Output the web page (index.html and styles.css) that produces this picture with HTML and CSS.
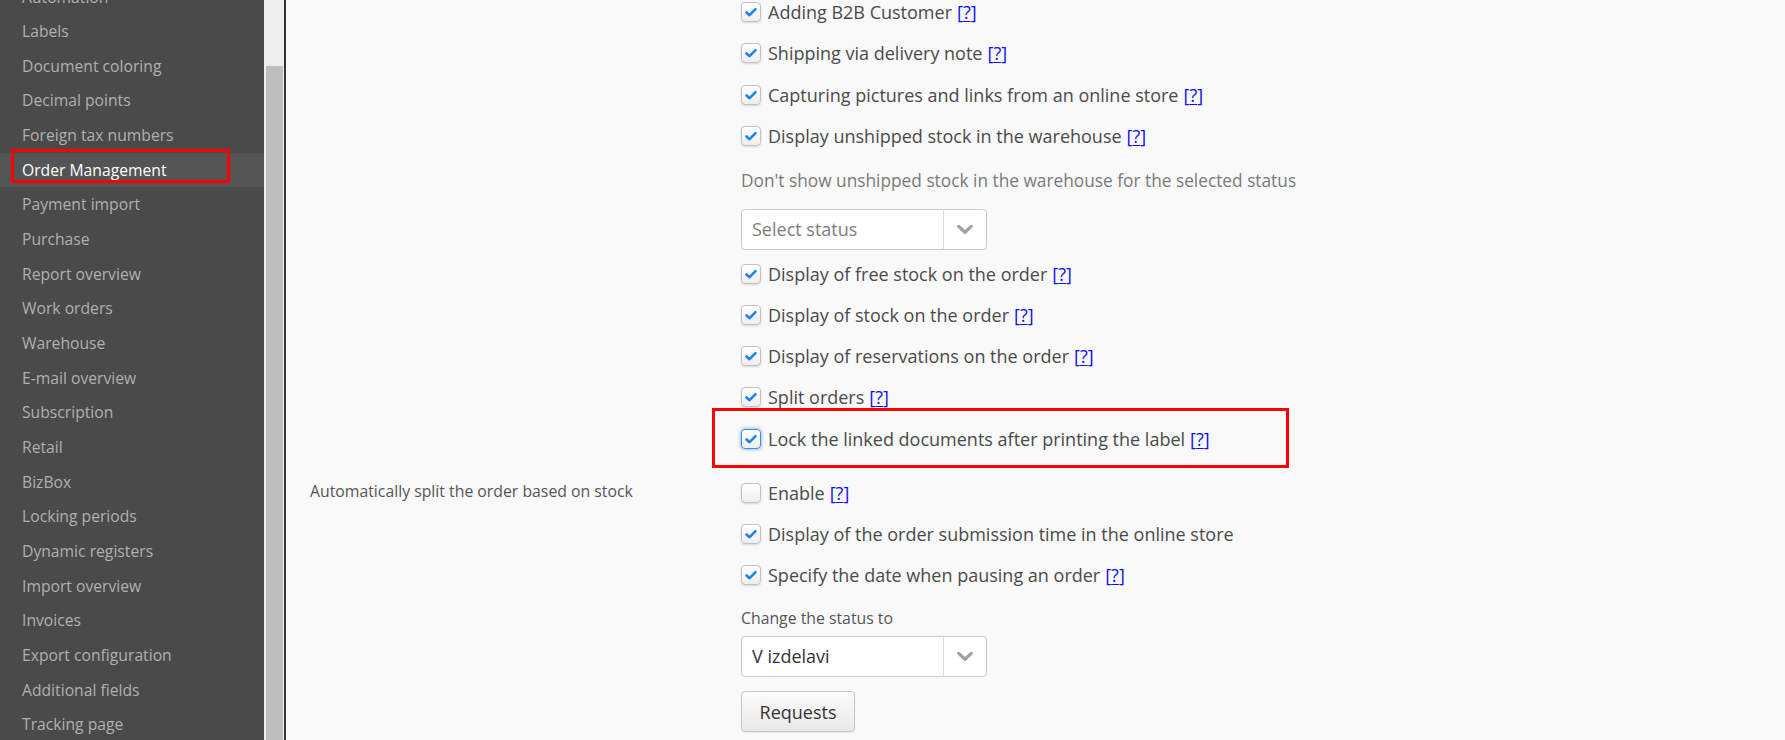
FILE: index.html
```html
<!DOCTYPE html>
<html>
<head>
<meta charset="utf-8">
<link rel="stylesheet" href="styles.css">
</head>
<body>
<div class="app">
  <nav class="sidebar">
    <ul class="menu">
      <li class="menu-item">Automation</li>
      <li class="menu-item">Labels</li>
      <li class="menu-item">Document coloring</li>
      <li class="menu-item">Decimal points</li>
      <li class="menu-item">Foreign tax numbers</li>
      <li class="menu-item active">Order Management<span class="mark mark-side"></span></li>
      <li class="menu-item">Payment import</li>
      <li class="menu-item">Purchase</li>
      <li class="menu-item">Report overview</li>
      <li class="menu-item">Work orders</li>
      <li class="menu-item">Warehouse</li>
      <li class="menu-item">E-mail overview</li>
      <li class="menu-item">Subscription</li>
      <li class="menu-item">Retail</li>
      <li class="menu-item">BizBox</li>
      <li class="menu-item">Locking periods</li>
      <li class="menu-item">Dynamic registers</li>
      <li class="menu-item">Import overview</li>
      <li class="menu-item">Invoices</li>
      <li class="menu-item">Export configuration</li>
      <li class="menu-item">Additional fields</li>
      <li class="menu-item">Tracking page</li>
    </ul>
  </nav>
  <div class="scrollbar"><div class="thumb"></div></div>
  <div class="divider"></div>
  <main class="content">
    <section class="group first">
      <div class="group-label"></div>
      <div class="group-body">
        <label class="check"><span class="box on"><svg viewBox="0 0 20 20"><path d="M5 10.5 L8.4 13.6 L15 6.8"/></svg></span>Adding B2B Customer <a class="help">[<u>?</u>]</a></label>
        <label class="check"><span class="box on"><svg viewBox="0 0 20 20"><path d="M5 10.5 L8.4 13.6 L15 6.8"/></svg></span>Shipping via delivery note <a class="help">[<u>?</u>]</a></label>
        <label class="check"><span class="box on"><svg viewBox="0 0 20 20"><path d="M5 10.5 L8.4 13.6 L15 6.8"/></svg></span>Capturing pictures and links from an online store <a class="help">[<u>?</u>]</a></label>
        <label class="check"><span class="box on"><svg viewBox="0 0 20 20"><path d="M5 10.5 L8.4 13.6 L15 6.8"/></svg></span>Display unshipped stock in the warehouse <a class="help">[<u>?</u>]</a></label>
        <p class="hint">Don't show unshipped stock in the warehouse for the selected status</p>
        <div class="select"><span class="select-value placeholder">Select status</span><span class="select-arrow"><svg viewBox="0 0 20 12"><path d="M3 2.5 L10 9 L17 2.5"/></svg></span></div>
        <label class="check"><span class="box on"><svg viewBox="0 0 20 20"><path d="M5 10.5 L8.4 13.6 L15 6.8"/></svg></span>Display of free stock on the order <a class="help">[<u>?</u>]</a></label>
        <label class="check"><span class="box on"><svg viewBox="0 0 20 20"><path d="M5 10.5 L8.4 13.6 L15 6.8"/></svg></span>Display of stock on the order <a class="help">[<u>?</u>]</a></label>
        <label class="check"><span class="box on"><svg viewBox="0 0 20 20"><path d="M5 10.5 L8.4 13.6 L15 6.8"/></svg></span>Display of reservations on the order <a class="help">[<u>?</u>]</a></label>
        <label class="check"><span class="box on"><svg viewBox="0 0 20 20"><path d="M5 10.5 L8.4 13.6 L15 6.8"/></svg></span>Split orders <a class="help">[<u>?</u>]</a></label>
        <label class="check highlighted"><span class="box on focus"><svg viewBox="0 0 20 20"><path d="M5 10.5 L8.4 13.6 L15 6.8"/></svg></span>Lock the linked documents after printing the label <a class="help">[<u>?</u>]</a><span class="mark mark-main"></span></label>
      </div>
    </section>
    <section class="group">
      <div class="group-label">Automatically split the order based on stock</div>
      <div class="group-body">
        <label class="check"><span class="box"></span>Enable <a class="help">[<u>?</u>]</a></label>
        <label class="check"><span class="box on"><svg viewBox="0 0 20 20"><path d="M5 10.5 L8.4 13.6 L15 6.8"/></svg></span>Display of the order submission time in the online store</label>
        <label class="check"><span class="box on"><svg viewBox="0 0 20 20"><path d="M5 10.5 L8.4 13.6 L15 6.8"/></svg></span>Specify the date when pausing an order <a class="help">[<u>?</u>]</a></label>
        <p class="field-label">Change the status to</p>
        <div class="select"><span class="select-value">V izdelavi</span><span class="select-arrow"><svg viewBox="0 0 20 12"><path d="M3 2.5 L10 9 L17 2.5"/></svg></span></div>
        <button class="btn">Requests</button>
      </div>
    </section>
  </main>
</div>
</body>
</html>
```

FILE: styles.css
```css
* { box-sizing: border-box; }
html, body { margin: 0; padding: 0; height: 100%; overflow: hidden; }
body { font-family: "Open Sans", "Liberation Sans", sans-serif; background: #f9f9f9; }

.app { display: flex; height: 740px; }

.sidebar { width: 264px; flex: none; background: #4a4a4a; overflow: hidden; }
.menu { list-style: none; margin: -20.5px 0 0 0; padding: 0; }
.menu-item {
  position: relative;
  height: 34.67px; line-height: 34.67px;
  padding-left: 22px;
  font-size: 15.7px; color: #b0b0b0;
  white-space: nowrap;
}
.menu-item.active { background: #545454; color: #ffffff; }

.mark { position: absolute; border: 3px solid #ff0000; pointer-events: none; }
.mark-side { left: 11px; top: -4px; width: 219px; height: 34px; }
.mark-main { left: -29px; top: -10.5px; width: 577px; height: 60px; }

.scrollbar { width: 20px; flex: none; background: #eeeeee; padding: 66px 1px 0 2px; }
.thumb { background: #bebebe; height: 100%; }
.divider { width: 2px; flex: none; background: #333333; }

.content { flex: 1; padding-left: 24px; color: #4a4a4a; }

.group { display: grid; grid-template-columns: 431px 1fr; }
.group.first { margin-top: -8.6px; }
.group + .group { margin-top: 12.8px; }
.group-label { font-size: 15.8px; color: #555; line-height: 22px; padding-top: 7.5px; }

.group-body { display: flex; flex-direction: column; align-items: flex-start; }

.check {
  position: relative;
  display: flex; align-items: center;
  height: 41.3px;
  font-size: 18px; white-space: nowrap;
}
.help { color: #1010ee; margin-left: 5px; }
.help u { text-decoration-thickness: 1px; text-underline-offset: 2px; }

.box {
  width: 20px; height: 20px; flex: none;
  margin-right: 7px;
  border: 1px solid #c2c2c2; border-radius: 4px;
  background: linear-gradient(#ffffff, #eeeeee);
  box-shadow: 0 1px 2px rgba(0,0,0,0.14);
  display: flex; align-items: center; justify-content: center;
}
.box svg { width: 18px; height: 18px; }
.box path { fill: none; stroke: #1e82e6; stroke-width: 2.8; stroke-linecap: round; stroke-linejoin: round; }
.box.focus { border: 1.5px solid #3d8ee0; box-shadow: 0 0 3px 1px rgba(80,150,230,0.55); }

.hint { margin: 13px 0 17px 0; font-size: 17.3px; line-height: 22px; color: #7a7a7a; white-space: nowrap; }
.field-label { margin: 11px 0 7px 0; font-size: 15.8px; line-height: 22px; color: #555; }

.select {
  display: flex; width: 246px; height: 41px;
  border: 1px solid #cccccc; border-radius: 4px; background: #ffffff;
  margin-bottom: 3.3px;
}
.select-value { flex: 1; padding-left: 10px; line-height: 39px; font-size: 18px; color: #333; }
.select-value.placeholder { color: #7d7d7d; }
.select-arrow { width: 43px; border-left: 1px solid #dddddd; display: flex; align-items: center; justify-content: center; }
.select-arrow svg { width: 18px; height: 11px; }
.select-arrow path { fill: none; stroke: #a0a0a0; stroke-width: 3.6; stroke-linecap: round; stroke-linejoin: round; }

.btn {
  margin-top: 11px;
  width: 114px; height: 41px;
  font-family: "Open Sans", "Liberation Sans", sans-serif;
  font-size: 18px; color: #333;
  background: linear-gradient(#fbfbfb, #e9e9e9);
  border: 1px solid #c6c6c6; border-radius: 4px;
  box-shadow: 0 1px 1px rgba(0,0,0,0.06);
}
```
